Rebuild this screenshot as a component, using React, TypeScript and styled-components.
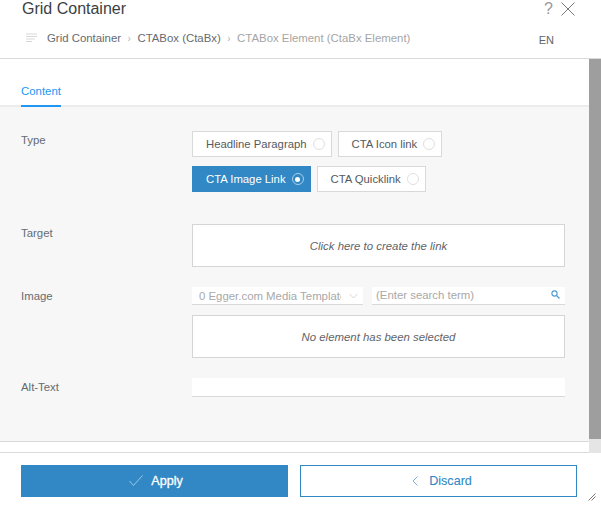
import React from "react";
import styled, { createGlobalStyle } from "styled-components";

const Global = createGlobalStyle`
  html, body { margin: 0; padding: 0; background: #fff; }
  body { font-family: "Liberation Sans", Arial, sans-serif; }
  * { box-sizing: border-box; }
`;
const Dialog = styled.div`
  position: relative; width: 601px; height: 506px; background: #fff; overflow: hidden;
  display: flex; flex-direction: column;
`;
const Header = styled.header`
  height: 59px; border-bottom: 1px solid #d9d9d9; padding-left: 22px; display: flex; flex-direction: column;
`;
const TitleRow = styled.div`
  height: 29px; display: flex; justify-content: space-between; align-items: flex-start;
`;
const Title = styled.h1`
  margin: 0; font-size: 16px; line-height: 18px; font-weight: 400; color: #3a3f45;
`;
const TopIcons = styled.div`
  display: flex; align-items: center; gap: 8px; padding: 1px 26px 0 0; color: #999; font-size: 16px; line-height: 16px;
`;
const CrumbRow = styled.div`
  display: flex; align-items: center; height: 18px; font-size: 11.4px; color: #666b70;
`;
const Crumb = styled.span<{ $last?: boolean }>`
  color: ${p => (p.$last ? "#a5a5a5" : "#666b70")}; white-space: nowrap;
`;
const Sep = styled.span`
  color: #b5b5b5; margin: 0 6.5px; font-size: 10px;
`;
const Lang = styled.span`
  margin-left: auto; margin-right: 47px; margin-top: 4px; font-size: 11px; color: #5f656b;
`;
const Main = styled.div`
  display: flex; height: 394px;
`;
const Column = styled.div`
  width: 589px; display: flex; flex-direction: column;
`;
const Tabs = styled.nav`
  height: 48px; border-bottom: 2px solid #ececec; padding-left: 21px; display: flex; background: #fff;
`;
const Tab = styled.div`
  height: 48px; width: 40px; padding-top: 26px; font-size: 11.4px; line-height: 13px; color: #2196f3;
  border-bottom: 2px solid #2196f3; white-space: nowrap;
`;
const Content = styled.div`
  height: 335px; background: #f7f7f7; border-bottom: 1px solid #d9d9d9; padding: 0 24px 0 21px;
  display: flex; flex-direction: column;
`;
const Strip = styled.div`
  height: 11px; background: #fff; border-bottom: 1px solid #d9d9d9;
`;
const Row = styled.div<{ $h: number; $top?: number }>`
  display: grid; grid-template-columns: 171px 373px; height: ${p => p.$h}px; padding-top: ${p => p.$top ?? 0}px;
`;
const Label = styled.div`
  font-size: 11.4px; line-height: 13px; color: #666b70; padding-top: 3px;
`;
const Options = styled.div`
  display: flex; flex-direction: column; gap: 9px;
`;
const OptRow = styled.div`
  display: flex; gap: 6px;
`;
const Option = styled.div<{ $active?: boolean }>`
  height: 26px; display: flex; align-items: center; padding: 0 6px 0 13px; gap: 6px; font-size: 11.3px;
  white-space: nowrap; background: ${p => (p.$active ? "#3288c4" : "#fff")};
  color: ${p => (p.$active ? "#fff" : "#555a60")};
  border: 1px solid ${p => (p.$active ? "#3288c4" : "#d9d9d9")};
`;
const Radio = styled.span<{ $active?: boolean }>`
  width: 12px; height: 12px; border-radius: 50%; flex: none; display: flex; align-items: center; justify-content: center;
  border: 1px solid ${p => (p.$active ? "#a9cfe8" : "#e0e0e0")}; background: ${p => (p.$active ? "#3288c4" : "#fff")};
  &::after { content: ""; width: 5px; height: 5px; border-radius: 50%; background: ${p => (p.$active ? "#fff" : "transparent")}; }
`;
const Placeholder = styled.div<{ $h: number }>`
  height: ${p => p.$h}px; background: #fff; border: 1px solid #d5d5d5; display: flex; align-items: center; justify-content: center;
  font-style: italic; font-size: 11.4px; color: #5f6368;
`;
const Stack = styled.div`
  display: flex; flex-direction: column; gap: 10px;
`;
const Filters = styled.div`
  display: flex; gap: 9px;
`;
const Select = styled.div`
  width: 171px; height: 18px; background: #fff; border-bottom: 1px solid #d9d9d9; display: flex; align-items: center;
  padding: 0 5px 0 7px; font-size: 11.4px; color: #a8a8a8; justify-content: space-between;
`;
const SelectText = styled.span`
  width: 142px; overflow: hidden; white-space: nowrap;
`;
const Search = styled.div`
  width: 193px; height: 18px; background: #fff; border-bottom: 1px solid #d9d9d9; display: flex; align-items: center;
  padding: 0 5px 2px 4px; font-size: 11.4px; color: #a8a8a8; justify-content: space-between;
`;
const TextInput = styled.div`
  height: 19px; background: #fff; border-bottom: 1px solid #d9d9d9;
`;
const Scrollbar = styled.div`
  width: 12px; background: #e5e5e5; display: flex; flex-direction: column;
`;
const Thumb = styled.div`
  height: 380px; background: #9e9e9e;
`;
const Footer = styled.footer`
  display: flex; gap: 12px; padding: 12px 0 0 21px;
`;
const Button = styled.button<{ $primary?: boolean }>`
  width: ${p => (p.$primary ? 267 : 277)}px; height: 32px; display: flex; align-items: center; justify-content: center;
  gap: ${p => (p.$primary ? 8 : 11)}px; font-family: inherit; font-size: 12.6px;
  padding: 0 0 1px ${p => (p.$primary ? 3 : 7)}px;
  -webkit-text-stroke: ${p => (p.$primary ? "0.3px" : "0.1px")};
  background: ${p => (p.$primary ? "#3288c4" : "#fff")}; color: ${p => (p.$primary ? "#fff" : "#3288c4")};
  border: ${p => (p.$primary ? "none" : "1px solid #3288c4")};
`;
const Grip = styled.svg`
  position: absolute; right: 5px; bottom: 5px;
`;
const BurgerIcon = styled.svg`
  margin: 0 10px 0 4px; flex: none;
`;

const Opt = ({ label, active }: { label: string; active?: boolean }) => (
  <Option $active={active}>{label}<Radio $active={active} /></Option>
);

export default function App() {
  return (
    <Dialog>
      <Global />
      <Header>
        <TitleRow>
          <Title>Grid Container</Title>
          <TopIcons>
            <span>?</span>
            <svg width="14" height="14" viewBox="0 0 14 14"><path d="M0.5 0.5 13.5 13.5M13.5 0.5 0.5 13.5" stroke="#555" strokeWidth="0.8" fill="none" /></svg>
          </TopIcons>
        </TitleRow>
        <CrumbRow>
          <BurgerIcon width="11" height="10" viewBox="0 0 11 10">
            <path d="M0 1H11M0 3.5H11M0 6H9M0 8.5H6" stroke="#d8d8d8" strokeWidth="1" fill="none" />
          </BurgerIcon>
          <Crumb>Grid Container</Crumb><Sep>›</Sep>
          <Crumb>CTABox (CtaBx)</Crumb><Sep>›</Sep>
          <Crumb $last>CTABox Element (CtaBx Element)</Crumb>
          <Lang>EN</Lang>
        </CrumbRow>
      </Header>
      <Main>
        <Column>
          <Tabs><Tab>Content</Tab></Tabs>
          <Content>
            <Row $h={117} $top={24}>
              <Label>Type</Label>
              <Options>
                <OptRow><Opt label="Headline Paragraph" /><Opt label="CTA Icon link" /></OptRow>
                <OptRow><Opt label="CTA Image Link" active /><Opt label="CTA Quicklink" /></OptRow>
              </Options>
            </Row>
            <Row $h={63}>
              <Label>Target</Label>
              <Placeholder $h={43}>Click here to create the link</Placeholder>
            </Row>
            <Row $h={91}>
              <Label>Image</Label>
              <Stack>
                <Filters>
                  <Select>
                    <SelectText>0 Egger.com Media Template</SelectText>
                    <svg width="9" height="6" viewBox="0 0 9 6"><path d="M0.5 1 4.5 5 8.5 1" stroke="#d5d5d5" fill="none" /></svg>
                  </Select>
                  <Search>
                    <span>(Enter search term)</span>
                    <svg width="9" height="9" viewBox="0 0 9 9"><circle cx="3.5" cy="3.5" r="2.6" stroke="#4d9bd1" strokeWidth="1.1" fill="none" /><path d="M5.5 5.5 8.5 8.5" stroke="#4d9bd1" strokeWidth="1.3" /></svg>
                  </Search>
                </Filters>
                <Placeholder $h={43}>No element has been selected</Placeholder>
              </Stack>
            </Row>
            <Row $h={20}>
              <Label>Alt-Text</Label>
              <TextInput />
            </Row>
          </Content>
          <Strip />
        </Column>
        <Scrollbar><Thumb /></Scrollbar>
      </Main>
      <Footer>
        <Button $primary>
          <svg width="14" height="11" viewBox="0 0 14 11"><path d="M0.5 6 4.5 10.5 13.5 0.5" stroke="#a9cfe8" strokeWidth="0.9" fill="none" /></svg>
          Apply
        </Button>
        <Button>
          <svg width="6" height="10" viewBox="0 0 6 10"><path d="M5.5 0.5 1 5 5.5 9.5" stroke="#68a9d6" strokeWidth="0.9" fill="none" /></svg>
          Discard
        </Button>
      </Footer>
      <Grip width="8" height="8" viewBox="0 0 8 8"><path d="M0.5 7.5 7.5 0.5M3.5 7.5 7.5 3.5" stroke="#555" strokeWidth="0.8" fill="none" /></Grip>
    </Dialog>
  );
}
